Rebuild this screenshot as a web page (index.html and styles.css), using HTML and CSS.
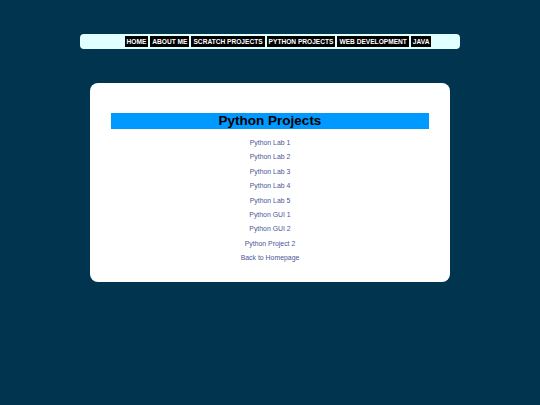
FILE: index.html
```html
<!DOCTYPE html>
<html lang="en">
<head>
<meta charset="utf-8">
<title>Python Projects</title>
<link rel="stylesheet" href="styles.css">
</head>
<body>
<nav class="nav">
  <ul class="nav-list">
    <li><a class="nav-item" href="#">HOME</a></li>
    <li><a class="nav-item" href="#">ABOUT ME</a></li>
    <li><a class="nav-item" href="#">SCRATCH PROJECTS</a></li>
    <li><a class="nav-item" href="#">PYTHON PROJECTS</a></li>
    <li><a class="nav-item" href="#">WEB DEVELOPMENT</a></li>
    <li><a class="nav-item" href="#">JAVA</a></li>
  </ul>
</nav>
<main class="card">
  <h1 class="title">Python Projects</h1>
  <ul class="links">
    <li><a class="link" href="#">Python Lab 1</a></li>
    <li><a class="link" href="#">Python Lab 2</a></li>
    <li><a class="link" href="#">Python Lab 3</a></li>
    <li><a class="link" href="#">Python Lab 4</a></li>
    <li><a class="link" href="#">Python Lab 5</a></li>
    <li><a class="link" href="#">Python GUI 1</a></li>
    <li><a class="link" href="#">Python GUI 2</a></li>
    <li><a class="link" href="#">Python Project 2</a></li>
    <li><a class="link" href="#">Back to Homepage</a></li>
  </ul>
</main>
</body>
</html>
```
FILE: styles.css
```css
html, body {
  margin: 0;
  padding: 0;
}
body {
  background: #01344f;
  font-family: "Liberation Sans", Arial, sans-serif;
  padding-top: 34px;
}
.nav {
  width: 380px;
  height: 15px;
  margin-left: 80px;
  background: #e0ffff;
  border-radius: 4px;
  display: flex;
  align-items: center;
}
.nav-list {
  list-style: none;
  margin: 0;
  padding: 0 0 0 16px;
  flex: 1;
  display: flex;
  justify-content: center;
  gap: 2px;
}
.nav-item {
  display: block;
  background: #000;
  color: #fff;
  font-weight: bold;
  font-size: 6.6px;
  line-height: 11px;
  padding: 0 2px;
  text-decoration: none;
}
.card {
  width: 318px;
  margin: 34px 0 0 90px;
  padding: 30px 21px 19px;
  background: #fff;
  border-radius: 8px;
}
.title {
  margin: 0;
  height: 16px;
  line-height: 16px;
  background: #0099ff;
  color: #000;
  font-size: 13.5px;
  font-weight: bold;
  text-align: center;
}
.links {
  list-style: none;
  margin: 4px 0 0;
  padding: 0;
  text-align: center;
}
.links li {
  height: 14.4px;
  line-height: 14.4px;
}
.link {
  color: #4b5596;
  font-size: 6.9px;
  text-decoration: none;
}
```
